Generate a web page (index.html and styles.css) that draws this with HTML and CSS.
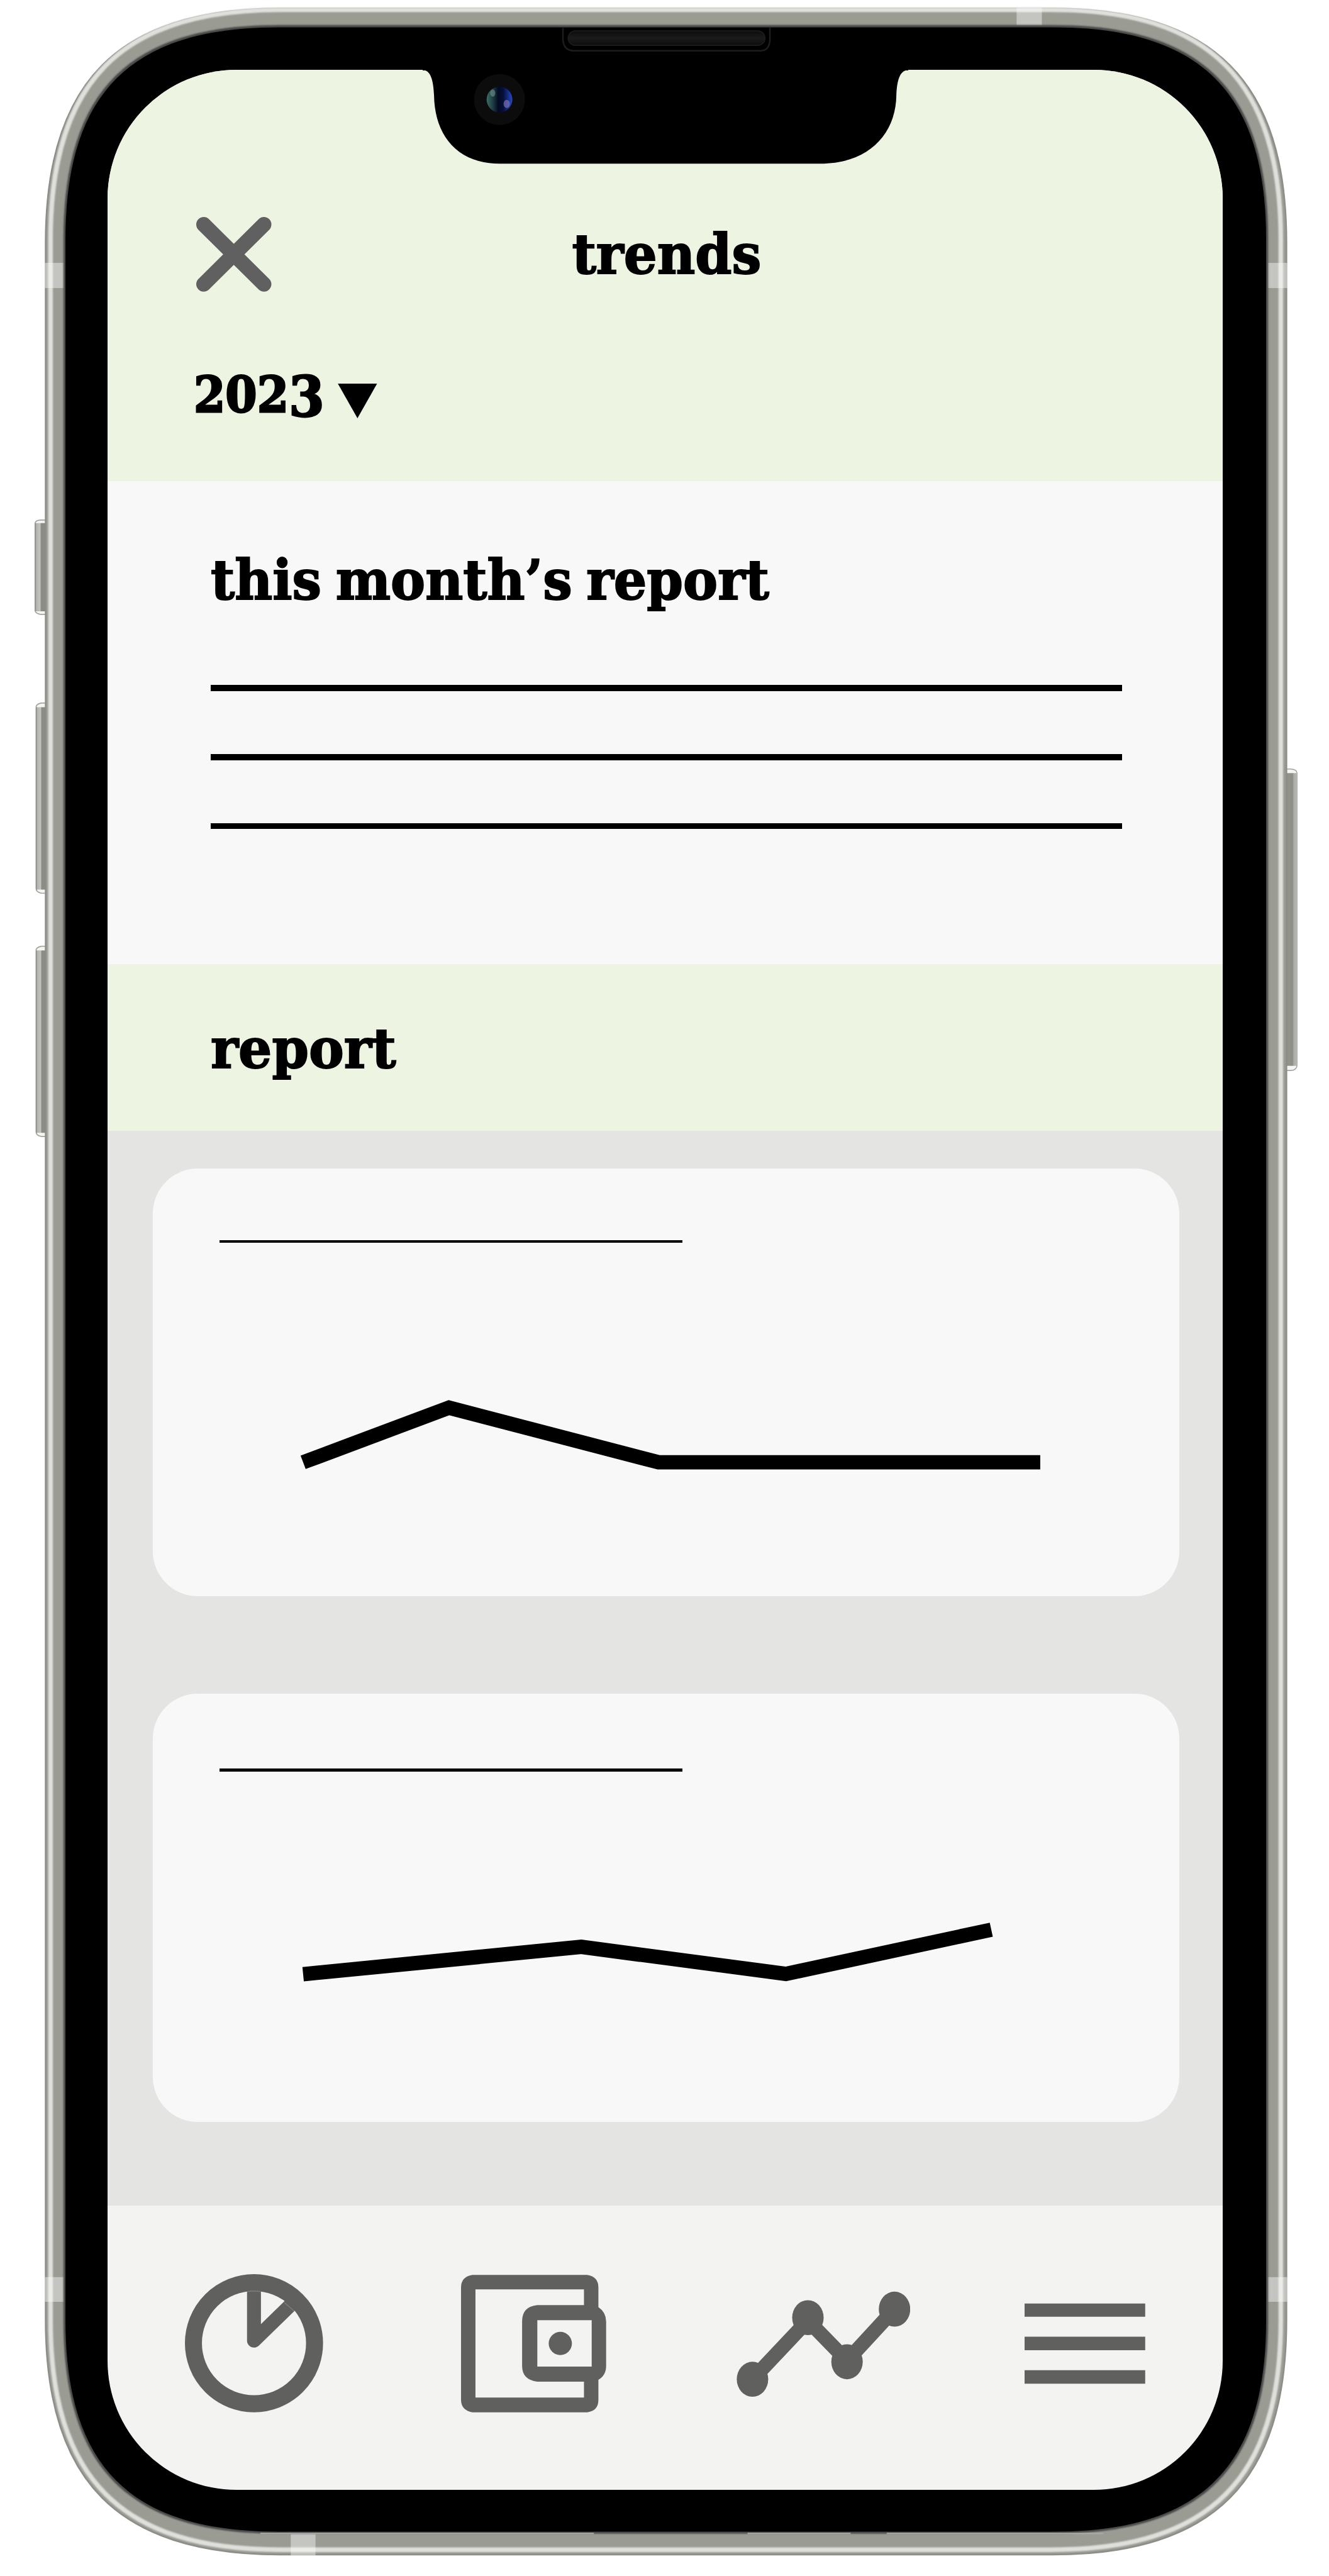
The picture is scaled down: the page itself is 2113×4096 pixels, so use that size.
FILE: index.html
```html
<!DOCTYPE html>
<html lang="en">
<head>
<meta charset="utf-8">
<title>trends</title>
<link rel="stylesheet" href="styles.css">
</head>
<body>
<div class="device">
  <svg class="frame" viewBox="0 0 2578 4998" preserveAspectRatio="none" aria-hidden="true">
    <defs>
      <linearGradient id="keyLeft"><stop offset="0" stop-color="#85857f"/><stop offset=".12" stop-color="#b4b4b1"/><stop offset=".4" stop-color="#c2c2bf"/><stop offset=".5" stop-color="#8b8c84"/><stop offset="1" stop-color="#8b8c84"/></linearGradient>
      <linearGradient id="keyRight"><stop offset="0" stop-color="#7f8079"/><stop offset=".2" stop-color="#92938b"/><stop offset=".6" stop-color="#8e8f87"/><stop offset=".7" stop-color="#adadab"/><stop offset="1" stop-color="#b8b8b6"/></linearGradient>
      <linearGradient id="lens"><stop offset="0" stop-color="#3c6e62"/><stop offset=".3" stop-color="#16303c"/><stop offset=".45" stop-color="#030a20"/><stop offset=".65" stop-color="#06103a"/><stop offset="1" stop-color="#2549c4"/></linearGradient>
      <linearGradient id="grille" x2="0" y2="1"><stop offset="0" stop-color="#0c0c0c"/><stop offset=".5" stop-color="#1b1b1b"/><stop offset="1" stop-color="#0c0c0c"/></linearGradient>
      <filter id="soft" x="-2%" y="-2%" width="104%" height="104%"><feGaussianBlur stdDeviation="1.6"/></filter>
    </defs>
    <!-- side keys -->
    <g stroke="#a3a3a0" stroke-width="2">
      <path fill="#f4f4f3" d="M92 1009H78Q68 1010 68 1016V1184Q68 1190 78 1192H92Z"/>
      <path fill="#f4f4f3" d="M92 1364H80Q70 1366 70 1372V1724Q70 1731 80 1733H92Z"/>
      <path fill="#f4f4f3" d="M92 1836H80Q70 1838 70 1844V2196Q70 2203 80 2205H92Z"/>
      <path fill="#f4f4f3" d="M2490 1492H2504Q2516 1493 2516 1500V2066Q2516 2076 2504 2077H2490Z"/>
    </g>
    <path fill="url(#keyLeft)" d="M68 1015H92V1186H68Z"/>
    <path fill="url(#keyLeft)" d="M70 1372H92V1726H70Z"/>
    <path fill="url(#keyLeft)" d="M70 1844H92V2198H70Z"/>
    <path fill="url(#keyRight)" d="M2494 1500H2516.500V2068H2494Z"/>
    <!-- metal band -->
    <path fill="#9a9b93" stroke="#8d8e89" stroke-width="3" d="M88.500 471C88.500 158 230 16.500 542 16.500H2041C2354 16.500 2495.500 158 2495.500 471V4502C2495.500 4815 2354 4956.500 2041 4956.500H542C230 4956.500 88.500 4815 88.500 4502Z"/>
    <path fill="none" stroke="#dfe0dc" stroke-width="9" filter="url(#soft)" d="M98 465C98 158 236 19 543 19H2040C2347 19 2484.500 158 2484.500 465V4502C2484.500 4809 2347 4947 2040 4947H543C236 4947 98 4809 98 4502Z"/>
    <g fill="#fff" opacity=".42">
      <path d="M87 510H124V559H87ZM2459 510H2497V559H2459ZM87 4418H124V4466H87ZM2459 4418H2497V4466H2459ZM1972 15H2021V49H1972ZM564 4914H612V4958H564Z"/>
    </g>
    <!-- black bezel -->
    <path fill="#4a4a48" filter="url(#soft)" d="M123 465C123 176 250 48.500 540 48.500H2043C2333 48.500 2460 176 2460 465V4501C2460 4790 2333 4916 2043 4916H540C250 4916 123 4790 123 4501Z"/>
    <path fill="#000" d="M127 465C127 179 254 53 540 53H2043C2329 53 2456 179 2456 465V4501C2456 4787 2329 4912 2043 4912H540C254 4912 127 4787 127 4501Z"/>
    <path fill="none" stroke="#a9a9a7" stroke-width="2.500" d="M505 4915.500H1152M1450 4915.500H1650M1720 4915.500H2140"/>
    <!-- earpiece -->
    <path fill="none" stroke="#1d1d1d" stroke-width="3" d="M1092 54V78Q1094 98 1112 98.500H1476Q1492 98 1493.500 78V54"/>
    <rect x="1102" y="60" width="382" height="28" rx="14" fill="url(#grille)" stroke="#1d1d1d" stroke-width="2"/>
  </svg>

  <main class="screen">
    <header class="header">
      <div class="header-bar">
        <svg class="close" viewBox="381 421 146 145" role="img" aria-label="close"><path d="M395.500 435.600L512.300 551.400M512.300 435.600L395.500 551.400"/></svg>
        <h1 class="heading heading-trends">trends</h1>
      </div>
      <div class="year">
        <span class="year-value">202<span class="oldstyle">3</span></span>
        <svg class="caret" viewBox="0 0 76 67" aria-hidden="true"><path d="M0 0H76L38 67Z"/></svg>
      </div>
    </header>

    <section class="summary">
      <h2 class="heading heading-month">this month’s report</h2>
      <div class="lines"><hr class="line"><hr class="line"><hr class="line"></div>
    </section>

    <div class="section-bar"><h2 class="heading heading-report">report</h2></div>

    <section class="cards">
      <article class="card">
        <hr class="rule">
        <svg class="chart" viewBox="425.800 2411.500 1862 685"><path d="M588 2837.500L871 2731.600L1277.500 2837.500H2018"/></svg>
      </article>
      <article class="card card-low">
        <hr class="rule">
        <svg class="chart" viewBox="425.800 3437 1862 679"><path d="M588 3830L1127.600 3777L1524.500 3829.500L1923 3743.700"/></svg>
      </article>
    </section>

    <nav class="nav">
      <svg class="icon" viewBox="359 4412 268 268">
        <circle cx="493" cy="4546" r="117.500" fill="none" stroke="currentColor" stroke-width="33"/>
        <path fill="none" stroke="currentColor" stroke-width="27" stroke-linejoin="round" d="M493 4440V4541L566 4470"/>
        <path fill="none" stroke="#7a7a78" stroke-width="2" d="M480 4446Q493 4443.500 506 4446M552 4467L571 4484"/>
      </svg>
      <svg class="icon" viewBox="895 4412 282 268">
        <path fill="currentColor" fill-rule="evenodd" d="M917 4413.500H1140Q1161.500 4417 1161.500 4438V4476Q1176.500 4486 1176.500 4504V4590Q1176.500 4608 1161.500 4617V4656Q1161.500 4677 1140 4680H917Q895 4676 895 4656V4438Q895 4417 917 4413.500ZM923 4441.500V4651.500H1133.500V4620.500H1043Q1013.500 4617 1013.500 4590V4503Q1013.500 4475 1043 4472H1133.500V4441.500ZM1043 4501.500V4591.500H1148.500V4501.500Z"/>
        <circle cx="1087.600" cy="4546.500" r="22.500" fill="currentColor"/>
      </svg>
      <svg class="icon" viewBox="1429 4412 337 268">
        <path fill="none" stroke="currentColor" stroke-width="28" d="M1460 4616L1567.500 4502L1643.400 4580L1735.500 4480"/>
        <g fill="currentColor"><ellipse cx="1460" cy="4616" rx="30.500" ry="34"/><ellipse cx="1567.500" cy="4496.500" rx="30.500" ry="34"/><ellipse cx="1643.400" cy="4582" rx="30.500" ry="34"/><ellipse cx="1735.500" cy="4480" rx="30.500" ry="34"/></g>
      </svg>
      <svg class="icon" viewBox="1988 4412 234 268">
        <path fill="currentColor" d="M1988 4469H2222V4494.700H1988ZM1988 4533.500H2222V4559.500H1988ZM1988 4598.500H2222V4624.500H1988Z"/>
      </svg>
    </nav>
  </main>

  <svg class="notch" viewBox="820 130 942 190" aria-hidden="true">
    <path d="M820 130V136H825C837 140 841 160 842 184C843 260 885 317 970 317H1591C1685 317 1738 260 1739 184C1740 160 1744 140 1757 136H1762V130Z"/>
    <circle cx="969" cy="192.500" r="49.500" fill="#0c0c0c"/>
    <circle cx="969" cy="192.500" r="25" fill="url(#lens)"/>
    <ellipse cx="956" cy="180" rx="5" ry="7" fill="#7fa89b" opacity=".5"/>
    <ellipse cx="983" cy="201" rx="6" ry="8" fill="#8d7fc0" opacity=".6"/>
  </svg>
</div>
</body>
</html>
```
FILE: styles.css
```css
/* 1rem = 100 design units */
html {
  font-size: 81.957px;
}

body {
  margin: 0;
  background: #fff;
  font-family: "DejaVu Serif", serif;
  font-weight: 700;
  color: #000;
}

.device {
  position: relative;
  box-sizing: border-box;
  width: 2113px;
  height: 4096px;
  padding: 1.36rem 0 0 2.09rem;
  overflow: hidden;
}

.frame {
  position: absolute;
  left: 0;
  top: 0;
  width: 100%;
  height: 100%;
}

.screen {
  position: relative;
  display: flex;
  flex-direction: column;
  width: 21.627rem;
  height: 46.945rem;
  overflow: hidden;
  border-radius: 2.5rem;
  background: #f3f3f1;
}

.notch {
  position: absolute;
  left: 8.2rem;
  top: 1.3rem;
  width: 9.42rem;
  height: 1.9rem;
}

.heading {
  margin: 0;
  font-size: 1.07rem;
  line-height: 1.26rem;
  font-weight: 700;
  white-space: nowrap;
  -webkit-text-stroke: .025rem #000;
}

.heading-trends {
  transform: translateX(.03rem) scaleX(.95);
}

.heading-month,
.heading-report {
  transform-origin: left;
}

.heading-month {
  transform: scaleX(.942);
  word-spacing: -.08rem;
}

.heading-report {
  transform: scaleX(.955);
}

.header {
  box-sizing: border-box;
  flex: none;
  height: 7.98rem;
  padding: 2.85rem 1.72rem 0;
  background: #edf4e1;
}

.header-bar {
  display: grid;
  grid-template-columns: 1fr auto 1fr;
  align-items: center;
}

.close {
  width: 1.46rem;
  height: 1.45rem;
  fill: none;
  stroke: #606060;
  stroke-width: 29;
  stroke-linecap: round;
}

.year {
  display: flex;
  align-items: flex-start;
  margin-top: 1.44rem;
  margin-left: -.05rem;
}

.year-value {
  width: 2.795rem;
  font-size: .95rem;
  line-height: 1.13rem;
  transform: scaleX(.93);
  transform-origin: left;
  -webkit-text-stroke: .035rem #000;
}

.oldstyle {
  font-size: 1.12em;
  line-height: 0;
  vertical-align: -.09rem;
}

.caret {
  width: .765rem;
  height: .67rem;
  margin-top: .34rem;
}

.summary {
  box-sizing: border-box;
  flex: none;
  height: 9.36rem;
  padding: 1.285rem 1.947rem 0 2rem;
  background: #f8f8f8;
}

.lines {
  display: flex;
  flex-direction: column;
  gap: 1.217rem;
  margin-top: 1.408rem;
}

.line {
  width: 100%;
  height: .12rem;
  margin: 0;
  border: 0;
  background: #000;
}

.section-bar {
  box-sizing: border-box;
  flex: none;
  height: 3.24rem;
  padding: 1.02rem 2rem 0;
  background: #edf4e1;
}

.cards {
  box-sizing: border-box;
  display: flex;
  flex: none;
  flex-direction: column;
  gap: 1.895rem;
  height: 20.85rem;
  padding: .726rem .834rem 0 .88rem;
  background: #e4e4e2;
}

.card {
  box-sizing: border-box;
  height: 8.303rem;
  padding: 1.39rem 0 0 1.288rem;
  border-radius: .87rem;
  background: #f8f8f8;
}

.card-low {
  padding-top: 1.445rem;
}

.rule {
  width: 8.983rem;
  height: .06rem;
  margin: 0;
  border: 0;
  background: #000;
}

.chart {
  display: block;
  width: 18.62rem;
  fill: none;
  stroke: #000;
  stroke-width: 28;
}

.nav {
  display: grid;
  flex: 1;
  grid-template-columns: 5.36rem 5.34rem 5.59rem auto;
  align-content: start;
  padding: 1.33rem 1.5rem 0;
  color: #60605e;
}

.icon {
  height: 2.68rem;
}
```
